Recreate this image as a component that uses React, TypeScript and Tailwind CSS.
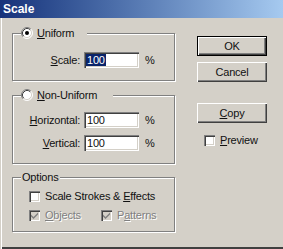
import React from 'react';

const sunken =
  'shadow-[inset_1px_1px_0_#808080,inset_2px_2px_0_#404040,inset_-1px_-1px_0_#fff,inset_-2px_-2px_0_#d4d0c8]';
const raised = 'shadow-[inset_1px_1px_0_#fff,inset_-1px_-1px_0_#404040,inset_-2px_-2px_0_#808080]';
const etched = 'border border-[#808080] shadow-[inset_1px_1px_0_#fff,1px_1px_0_#fff]';

function Radio({ checked }: { checked?: boolean }) {
  return (
    <svg width="12" height="12" viewBox="0 0 12 12" className="shrink-0">
      <circle cx="6" cy="6" r="5" fill="#fff" />
      <path d="M9.89 2.11A5.5 5.5 0 0 0 2.11 9.89" fill="none" stroke="#808080" />
      <path d="M9.18 2.82A4.5 4.5 0 0 0 2.82 9.18" fill="none" stroke="#404040" />
      <path d="M2.11 9.89A5.5 5.5 0 0 0 9.89 2.11" fill="none" stroke="#fff" />
      <path d="M2.82 9.18A4.5 4.5 0 0 0 9.18 2.82" fill="none" stroke="#d4d0c8" />
      {checked && <circle cx="6" cy="6" r="2" fill="#000" />}
    </svg>
  );
}

function Check({ checked, disabled }: { checked?: boolean; disabled?: boolean }) {
  return (
    <div className={`w-[11px] h-[11px] shrink-0 ${disabled ? 'bg-[#d4d0c8]' : 'bg-white'} ${sunken} flex items-center justify-center`}>
      {checked && (
        <svg width="7" height="7" viewBox="0 0 7 7">
          <path d="M0 2.5l2.5 2.5 4.5-4.5v2l-4.5 4.5-2.5-2.5z" fill={disabled ? '#808080' : '#000'} />
        </svg>
      )}
    </div>
  );
}

function Field({ value, selected }: { value: string; selected?: boolean }) {
  return (
    <div className={`w-[55px] h-[16px] bg-white ${sunken} flex items-center pl-[2px]`}>
      <span className={`leading-[12px] px-[1px] ${selected ? 'bg-[#0a246a] text-white' : ''}`}>{value}</span>
    </div>
  );
}

function Row({ label, u, value, selected }: { label: string; u: string; value: string; selected?: boolean }) {
  return (
    <div className="flex items-center h-[16px]">
      <span className="w-[71px] text-right pr-[4px]">
        <span className="underline">{u}</span>
        {label}
      </span>
      <Field value={value} selected={selected} />
      <span className="ml-[6px]">%</span>
    </div>
  );
}

function Btn({ children, def }: { children: React.ReactNode; def?: boolean }) {
  return (
    <div className={`w-[70px] h-[20px] flex items-center justify-center ${def ? 'border border-black' : ''} ${raised}`}>
      {children}
    </div>
  );
}

export default function App() {
  return (
    <div className="w-[283px] h-[249px] bg-[#d4d0c8] overflow-hidden text-[11px] leading-[13px] tracking-[-0.2px] text-[#111] font-['Liberation_Sans',Arial,sans-serif] shadow-[inset_1px_0_0_#d4d0c8,inset_2px_0_0_#fff,inset_0_-1px_0_#404040,inset_0_-2px_0_#404040]">
      <div className="h-[18px] bg-gradient-to-r from-[#17327a] to-[#a6caf0] flex items-center pl-[3px] text-white font-bold text-[12px] tracking-normal">
        Scale
      </div>
      <div className="flex pl-[12px]">
        <div className="w-[164px] flex flex-col pt-[15px]">
          {/* Uniform */}
          <div className={`relative h-[48px] w-[163px] ${etched} pt-[18px]`}>
            <div className="absolute left-[8px] -top-[7px] h-[12px] w-[66px] bg-[#d4d0c8] flex items-center gap-[4px]">
              <Radio checked />
              <span>
                <span className="underline">U</span>niform
              </span>
            </div>
            <Row label="cale:" u="S" value="100" selected />
          </div>

          {/* Non-Uniform */}
          <div className={`relative mt-[14px] h-[69px] w-[163px] ${etched} pt-[16px] flex flex-col gap-[7px]`}>
            <div className="absolute left-[8px] -top-[7px] h-[12px] w-[92px] bg-[#d4d0c8] flex items-center gap-[4px]">
              <Radio />
              <span>
                <span className="underline">N</span>on-Uniform
              </span>
            </div>
            <Row label="orizontal:" u="H" value="100" />
            <Row label="ertical:" u="V" value="100" />
          </div>

          {/* Options */}
          <div className={`relative mt-[13px] h-[55px] w-[163px] ${etched} pt-[13px] pl-[16px] flex flex-col gap-[8px]`}>
            <div className="absolute left-[8px] -top-[7px] h-[12px] px-[1px] bg-[#d4d0c8] flex items-center">
              Options
            </div>
            <div className="flex items-center gap-[5px] h-[11px]">
              <Check />
              <span>
                Scale Strokes &amp; <span className="underline">E</span>ffects
              </span>
            </div>
            <div className="flex items-center h-[11px] text-[#808080] [text-shadow:1px_1px_0_#fff]">
              <div className="flex items-center gap-[5px] w-[72px]">
                <Check checked disabled />
                <span>
                  <span className="underline">O</span>bjects
                </span>
              </div>
              <div className="flex items-center gap-[5px]">
                <Check checked disabled />
                <span>
                  P<span className="underline">a</span>tterns
                </span>
              </div>
            </div>
          </div>
        </div>

        <div className="ml-[21px] pt-[18px] flex flex-col">
          <Btn def>OK</Btn>
          <div className="mt-[6px]">
            <Btn>Cancel</Btn>
          </div>
          <div className="mt-[21px]">
            <Btn>
              <span>
                <span className="underline">C</span>opy
              </span>
            </Btn>
          </div>
          <div className="mt-[12px] pl-[7px] flex items-center gap-[5px] h-[11px]">
            <Check />
            <span>
              <span className="underline">P</span>review
            </span>
          </div>
        </div>
      </div>
    </div>
  );
}
